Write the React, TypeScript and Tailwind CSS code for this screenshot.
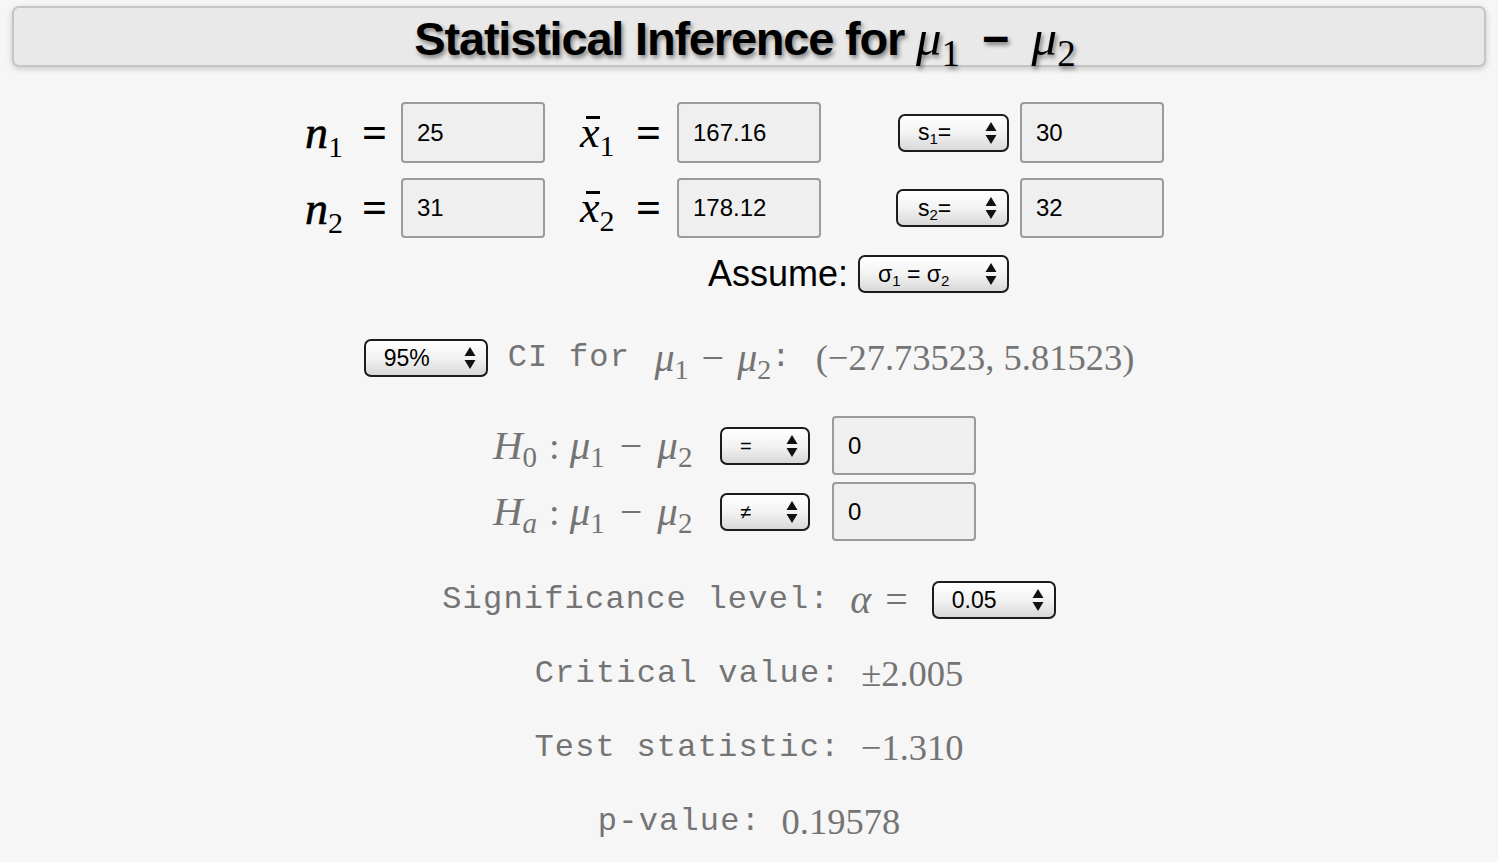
import type { ReactNode } from "react";

const serif = "font-['Liberation_Serif','Times_New_Roman',serif]";
const sans = "font-['Liberation_Sans',Arial,sans-serif]";
const mono = "font-['Liberation_Mono','Courier_New',monospace]";

function Arrows() {
  return (
    <svg width="12" height="24" viewBox="0 0 12 24" className="shrink-0">
      <path d="M0.5 10 L6 1 L11.5 10 Z" fill="#111" />
      <path d="M0.5 14 L11.5 14 L6 23 Z" fill="#111" />
    </svg>
  );
}

function Select({ children, className }: { children: ReactNode; className: string }) {
  return (
    <div
      className={`${className} h-[38px] flex items-center justify-between pr-[10px] rounded-[7px] border-2 border-[#1c1c1c] bg-gradient-to-b from-white via-[#f3f3f3] to-[#d8d8d8] ${sans} text-[23px] text-black shrink-0`}
    >
      <span className="leading-none whitespace-nowrap">{children}</span>
      <Arrows />
    </div>
  );
}

function Sub({ n }: { n: string }) {
  return <span className="text-[15px] relative top-[4px]">{n}</span>;
}

function Field({ value, tall = "h-[61px]" }: { value: string; tall?: string }) {
  return (
    <div
      className={`w-[144px] ${tall} shrink-0 flex items-center pl-[14px] rounded-[4px] border-2 border-[#9b9b9b] bg-[#efefef] ${sans} text-[24px] text-black`}
    >
      {value}
    </div>
  );
}

function Mu({ n, size = "text-[40px]", sub = "text-[28px]" }: { n: string; size?: string; sub?: string }) {
  return (
    <span className="whitespace-nowrap">
      <span className={`${serif} italic ${size}`}>μ</span>
      <span className={`${serif} ${sub} relative top-[0.3em]`}>{n}</span>
    </span>
  );
}

function XBar({ n }: { n: string }) {
  return (
    <span className="whitespace-nowrap">
      <span className={`relative ${serif} italic text-[44px]`}>
        x
        <span className="absolute left-[6px] top-[8px] w-[14px] h-[3px] bg-black" />
      </span>
      <span className={`${serif} text-[30px] relative top-[0.3em]`}>{n}</span>
    </span>
  );
}

function NLabel({ n }: { n: string }) {
  return (
    <span className="w-[57px] whitespace-nowrap">
      <span className={`${serif} italic text-[46px] [-webkit-text-stroke:0.6px_black]`}>n</span>
      <span className={`${serif} text-[30px] relative top-[0.3em]`}>{n}</span>
    </span>
  );
}

function Eq() {
  return <span className={`${serif} font-bold text-[44px] leading-none`}>=</span>;
}

export default function App() {
  return (
    <div className="w-full h-[862px] bg-[#f6f6f6] overflow-hidden">
      <div className="mx-[12px] mt-[6px] h-[61px] rounded-[7px] border-2 border-[#c5c5c5] bg-[#e9e9e9] shadow-[0_2px_6px_rgba(0,0,0,0.18)] flex items-center justify-center">
        <h1 className="flex items-baseline text-black [text-shadow:2px_3px_4px_rgba(0,0,0,0.45)] mr-[8px] mt-[4px]">
          <span className={`${sans} font-bold text-[47px] tracking-[-1.2px]`}>Statistical Inference for&nbsp;</span>
          <Mu n="1" size="text-[51px]" sub="text-[37px]" />
          <span className={`${sans} font-bold text-[47px] mx-[22px]`}>−</span>
          <Mu n="2" size="text-[51px]" sub="text-[37px]" />
        </h1>
      </div>

      {/* sample inputs */}
      <div className="flex items-center h-[61px] pl-[305px] mt-[35px]">
        <div className="w-[96px] flex items-center">
          <NLabel n="1" />
          <Eq />
        </div>
        <Field value="25" />
        <div className="ml-[35px] w-[97px] flex items-center">
          <span className="w-[56px]">
            <XBar n="1" />
          </span>
          <Eq />
        </div>
        <Field value="167.16" />
        <Select className="ml-[77px] w-[111px] pl-[18px]">
          s<Sub n="1" />=
        </Select>
        <div className="ml-[11px]">
          <Field value="30" />
        </div>
      </div>

      <div className="flex items-center h-[60px] pl-[305px] mt-[15px]">
        <div className="w-[96px] flex items-center">
          <NLabel n="2" />
          <Eq />
        </div>
        <Field value="31" tall="h-[60px]" />
        <div className="ml-[35px] w-[97px] flex items-center">
          <span className="w-[56px]">
            <XBar n="2" />
          </span>
          <Eq />
        </div>
        <Field value="178.12" tall="h-[60px]" />
        <Select className="ml-[75px] w-[113px] pl-[20px]">
          s<Sub n="2" />=
        </Select>
        <div className="ml-[11px]">
          <Field value="32" tall="h-[60px]" />
        </div>
      </div>

      <div className="flex items-center h-[38px] pl-[708px] mt-[17px]">
        <span className={`${sans} text-[36px] text-black mr-[10px]`}>Assume:</span>
        <Select className="w-[151px] pl-[18px]">
          σ<Sub n="1" /> = σ<Sub n="2" />
        </Select>
      </div>

      {/* confidence interval */}
      <div className="flex items-center justify-center h-[38px] mt-[46px] text-[#747474]">
        <Select className="w-[124px] pl-[18px] mr-[20px]">95%</Select>
        <span className={`${mono} text-[32px] tracking-[1.2px] whitespace-pre`}>CI for </span>
        <span className="flex items-baseline ml-[4px]">
          <Mu n="1" />
          <span className={`${serif} text-[40px] mx-[13px]`}>−</span>
          <Mu n="2" />
        </span>
        <span className={`${mono} text-[32px] whitespace-pre`}>: </span>
        <span className={`${serif} text-[36.5px] ml-[6px]`}>(−27.73523, 5.81523)</span>
      </div>

      {/* hypotheses */}
      <div className="flex flex-col items-start pl-[493px] mt-[39px] gap-[7px] text-[#747474]">
        {[
          { h: "0", op: "=", italicSub: false },
          { h: "a", op: "≠", italicSub: true },
        ].map((row) => (
          <div key={row.h} className="flex items-center h-[59px]">
            <span className="w-[227px] whitespace-nowrap flex items-baseline">
              <span className={`${serif} italic text-[41px]`}>H</span>
              <span className={`${serif} ${row.italicSub ? "italic" : ""} text-[29px] relative top-[0.3em]`}>
                {row.h}
              </span>
              <span className={`${serif} text-[38px] ml-[12px] mr-[10px]`}>:</span>
              <Mu n="1" size="text-[41px]" sub="text-[29px]" />
              <span className={`${serif} text-[40px] mx-[15px]`}>−</span>
              <Mu n="2" size="text-[41px]" sub="text-[29px]" />
            </span>
            <Select className="w-[90px] pl-[18px]">
              <span className="text-[20px]">{row.op}</span>
            </Select>
            <div className="ml-[22px]">
              <Field value="0" tall="h-[59px]" />
            </div>
          </div>
        ))}
      </div>

      {/* significance */}
      <div className="flex items-center justify-center h-[38px] mt-[40px] text-[#747474]">
        <span className={`${mono} text-[32px] tracking-[1.2px] whitespace-pre`}>Significance level: </span>
        <span className={`${serif} italic text-[40px]`}>α</span>
        <span className={`${serif} text-[40px] ml-[14px] mr-[24px]`}>=</span>
        <Select className="w-[124px] pl-[18px]">0.05</Select>
      </div>

      <div className="flex flex-col items-center mt-[33px] gap-[30px] text-[#747474]">
        <div className="h-[44px] flex items-center">
          <span className={`${mono} text-[32px] tracking-[1.2px] whitespace-pre`}>Critical value: </span>
          <span className={`${serif} text-[36.5px]`}>±2.005</span>
        </div>
        <div className="h-[44px] flex items-center">
          <span className={`${mono} text-[32px] tracking-[1.2px] whitespace-pre`}>Test statistic: </span>
          <span className={`${serif} text-[36.5px]`}>−1.310</span>
        </div>
        <div className="h-[44px] flex items-center">
          <span className={`${mono} text-[32px] tracking-[1.2px] whitespace-pre`}>p-value: </span>
          <span className={`${serif} text-[36.5px]`}>0.19578</span>
        </div>
      </div>
    </div>
  );
}
